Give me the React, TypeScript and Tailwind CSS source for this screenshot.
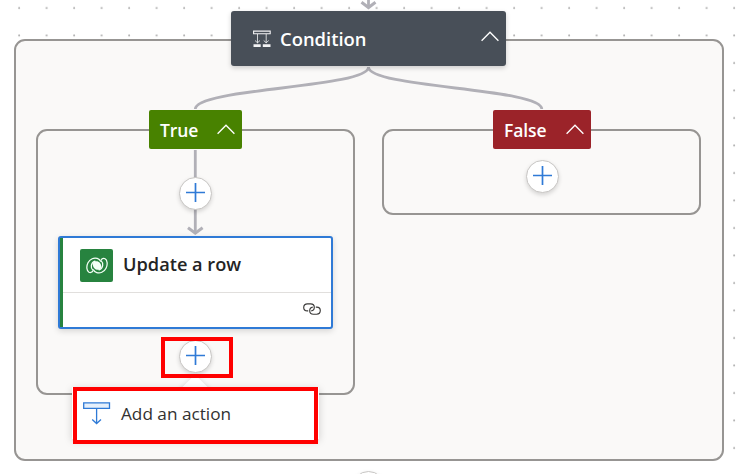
import React from "react";

const font = "font-['Open_Sans','Noto_Sans',sans-serif]";

function Chevron() {
  return (
    <svg width="18" height="11" viewBox="0 0 18 11" fill="none" stroke="white" strokeWidth="1.3">
      <path d="M0.6 9.8 9 1.2 17.4 9.8" />
    </svg>
  );
}

function AddButton({ place }: { place: string }) {
  return (
    <button
      className={`absolute flex h-[33px] w-[33px] items-center justify-center rounded-full border border-[#c8c6c4] bg-white shadow-[0_2px_4px_rgba(0,0,0,0.15)] ${place}`}
    >
      <svg width="19" height="19" viewBox="0 0 19 19" className="-mt-[2px]" stroke="#2f7ad6" strokeWidth="1.7">
        <path d="M9.5 0v19M0 9.5h19" />
      </svg>
    </button>
  );
}

function ConditionIcon() {
  return (
    <svg width="18" height="18" viewBox="0 0 18 18" fill="none" stroke="#f3f4f5">
      <path d="M.6 1.1h16.6v2.6H.6z" strokeWidth="1.1" />
      <path d="M4.5 4v9M13.2 4v9M2 10.5l2.5 2.3L7 10.5M10.7 10.5l2.5 2.3 2.5-2.3" strokeWidth="0.8" />
      <path d="M.5 15.6h7.2M9.8 15.6h7.7" strokeWidth="2.8" />
    </svg>
  );
}

function DataverseIcon() {
  return (
    <div className="flex h-[33px] w-[33px] items-center justify-center rounded-[2px] bg-[#27833f]">
      <svg width="22" height="17" viewBox="0 0 22 17" fill="none" stroke="#f4fff6" strokeWidth="1.25" strokeLinecap="round">
        <path d="M14.6 4.2C13.4 1.6 9.6.2 6.2 1.7 2.4 3.4.5 7.7.9 11.4c.4 4 3.1 5.1 5.8 3.2" />
        <path d="M7.4 12.8c1.2 2.6 5 4 8.4 2.5 3.8-1.7 5.7-6 5.3-9.7-.4-4-3.1-5.1-5.8-3.2" />
        <path d="M6.9 13.4C4.3 10.8 4.6 5.7 9 4.1M15.1 3.6c2.6 2.6 2.3 7.7-2.1 9.3" />
        <path d="M7 6.2C8.2 4 12 3.6 14 6c1.8 2.3 1.4 4.3.9 5.2-1.2 2.1-4.8 2-6.6 0C6.800 9.500 6.500 7.400 7 6.200z" fill="#f4fff6" stroke="none" />
      </svg>
    </div>
  );
}

function LinkIcon() {
  return (
    <svg width="18" height="12" viewBox="0 0 18 12" fill="none" stroke="#3b3a39" strokeWidth="1.15">
      <path d="M5.2 7.9H4.3C2.2 7.8.7 6.4.7 4.4.7 2.2 2.3.8 4.4.8h3.2c2.1 0 3.7 1.4 3.7 3.5 0 1.9-1.2 3.4-3.1 3.6" />
      <path d="M12.8 4.1h.9c2.1.1 3.6 1.5 3.6 3.5 0 2.2-1.6 3.6-3.7 3.6h-3.2c-2.1 0-3.7-1.4-3.7-3.5 0-1.9 1.2-3.4 3.1-3.6" />
    </svg>
  );
}

function ActionIcon() {
  return (
    <svg width="28" height="23" viewBox="0 0 28 23" fill="none" stroke="#2f7ad6" strokeWidth="1.3">
      <path d="M.7.8h25.8v5.6H.7z" fill="#e6f0fb" />
      <path d="M13.6 6.5v15M9.2 17.6l4.4 4 4.4-4" />
    </svg>
  );
}

function Connectors() {
  return (
    <svg className="absolute left-0 top-0" width="754" height="474" fill="none" stroke="#b1b0b7" strokeWidth="2.8">
      <path d="M368.5 0v7" />
      <path d="M361.5 2.2 368.5 7.5 375.5 2.2" strokeWidth="3" />
      <path d="M368.5 67C368.5 88 195.3 88 195.3 109M368.5 67C368.5 88 541.8 88 541.8 109" />
      <path d="M195.3 150v82" />
      <path d="M188 227.8 195.3 233.2 202.6 227.8" strokeWidth="3" />
    </svg>
  );
}

function BranchHeader({ label, look }: { label: string; look: string }) {
  return (
    <div className={`absolute top-[110px] flex h-[39px] items-center justify-between rounded-[2px] pl-[11px] pr-[7px] text-[17.5px] font-semibold text-white ${look}`}>
      <span className="pt-[2px] tracking-[-0.1px]">{label}</span>
      <Chevron />
    </div>
  );
}

export default function App() {
  return (
    <main className={`relative h-[474px] w-[754px] overflow-hidden bg-white ${font}`}>
      <svg className="absolute left-0 top-0" width="754" height="474">
        <defs>
          <pattern id="dots" x="5.25" y="-6" width="27.5" height="27.5" patternUnits="userSpaceOnUse">
            <circle cx="13.9" cy="13.9" r="1" fill="#aaa" />
          </pattern>
        </defs>
        <rect width="754" height="474" fill="url(#dots)" />
      </svg>

      <section className="absolute left-[14px] top-[39px] h-[422px] w-[710px] rounded-[11px] border-2 border-[#979593] bg-[#faf9f8]" />
      <section className="absolute left-[36px] top-[129px] h-[266px] w-[319px] rounded-[11px] border-2 border-[#979593]" />
      <section className="absolute left-[382px] top-[129px] h-[86px] w-[319px] rounded-[11px] border-2 border-[#979593]" />
      <Connectors />

      <header className="absolute left-[231px] top-[11px] flex h-[55px] w-[275px] items-center rounded-[3px] bg-[#484f58] pl-[22px] pr-[7px] text-white shadow-[0_2px_5px_rgba(0,0,0,0.18)]">
        <ConditionIcon />
        <h1 className="ml-[9px] mr-auto text-[18.4px] font-semibold">Condition</h1>
        <div className="-mt-[4px]"><Chevron /></div>
      </header>
      <BranchHeader label="True" look="left-[149px] w-[93px] bg-[#488200]" />
      <BranchHeader label="False" look="left-[493px] w-[97.5px] bg-[#9b2329]" />
      <AddButton place="left-[179px] top-[176.5px]" />
      <AddButton place="left-[525.5px] top-[160px]" />

      <article className="absolute left-[58px] top-[236px] flex h-[93px] w-[275px] flex-col rounded-[3px] border-2 border-[#2f7ad6] bg-white shadow-[0_2px_6px_rgba(0,0,0,0.15)]">
        <div className="flex h-full flex-col border-l-[3px] border-[#27833f]">
          <div className="flex h-[55px] shrink-0 items-center gap-[10px] border-b border-[#e1dfdd] pl-[17px]">
            <DataverseIcon />
            <h2 className="text-[18.2px] font-semibold text-[#242424]">Update a row</h2>
          </div>
          <div className="flex flex-1 items-center justify-end pb-[2px] pr-[10px]"><LinkIcon /></div>
        </div>
      </article>

      <div className="absolute left-[184px] top-[379px] h-[22px] w-[22px] rotate-45 bg-white shadow-[0_0_5px_rgba(0,0,0,0.12)]" />
      <AddButton place="left-[179px] top-[340px]" />
      <div className="absolute left-[160.5px] top-[337px] h-[41px] w-[72px] border-4 border-[#f00]" />

      <div className="absolute left-[72px] top-[387px] h-[52px] w-[247px] bg-white shadow-[0_2px_8px_rgba(0,0,0,0.18)]" />
      <button className="absolute left-[73px] top-[387px] flex h-[57px] w-[245px] items-center border-4 border-[#f00] bg-white pl-[6px] text-[#323130]">
        <div className="-mt-[4px]"><ActionIcon /></div>
        <span className="-mt-[4px] ml-[10px] text-[17.2px]">Add an action</span>
      </button>

      <AddButton place="left-[352px] top-[471px]" />
    </main>
  );
}
